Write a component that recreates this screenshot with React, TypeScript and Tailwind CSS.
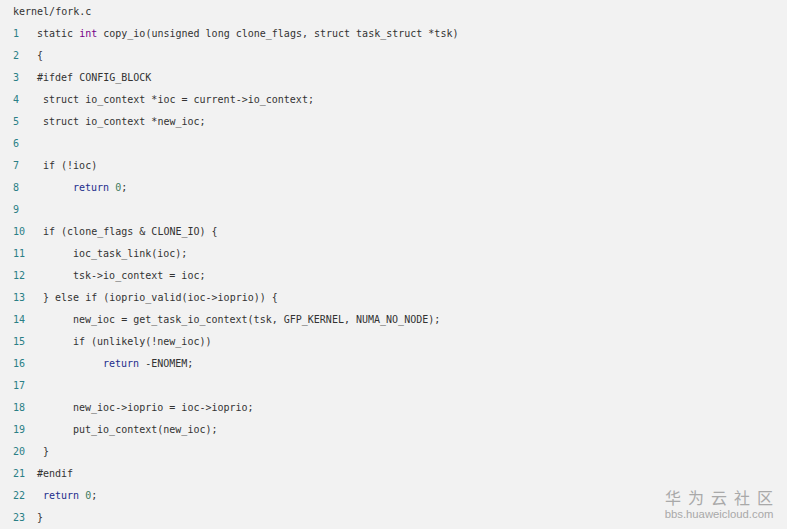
import React from "react";

type Seg = { t: string; c?: string };
const K = "text-[#770088]";
const R = "text-[#1c2d8c]";
const N = "text-[#3d7a5c]";

const lines: { pl: number; segs: Seg[] }[] = [
  { pl: 0, segs: [{ t: "static " }, { t: "int", c: K }, { t: " copy_io(unsigned long clone_flags, struct task_struct *tsk)" }] },
  { pl: 0, segs: [{ t: "{" }] },
  { pl: 0, segs: [{ t: "#ifdef CONFIG_BLOCK" }] },
  { pl: 6, segs: [{ t: "struct io_context *ioc = current->io_context;" }] },
  { pl: 6, segs: [{ t: "struct io_context *new_ioc;" }] },
  { pl: 0, segs: [{ t: "" }] },
  { pl: 6, segs: [{ t: "if (!ioc)" }] },
  { pl: 36, segs: [{ t: "return", c: R }, { t: " " }, { t: "0", c: N }, { t: ";" }] },
  { pl: 0, segs: [{ t: "" }] },
  { pl: 6, segs: [{ t: "if (clone_flags & CLONE_IO) {" }] },
  { pl: 36, segs: [{ t: "ioc_task_link(ioc);" }] },
  { pl: 36, segs: [{ t: "tsk->io_context = ioc;" }] },
  { pl: 6, segs: [{ t: "} else if (ioprio_valid(ioc->ioprio)) {" }] },
  { pl: 36, segs: [{ t: "new_ioc = get_task_io_context(tsk, GFP_KERNEL, NUMA_NO_NODE);" }] },
  { pl: 36, segs: [{ t: "if (unlikely(!new_ioc))" }] },
  { pl: 66, segs: [{ t: "return", c: R }, { t: " -ENOMEM;" }] },
  { pl: 0, segs: [{ t: "" }] },
  { pl: 36, segs: [{ t: "new_ioc->ioprio = ioc->ioprio;" }] },
  { pl: 36, segs: [{ t: "put_io_context(new_ioc);" }] },
  { pl: 6, segs: [{ t: "}" }] },
  { pl: 0, segs: [{ t: "#endif" }] },
  { pl: 6, segs: [{ t: "return", c: R }, { t: " " }, { t: "0", c: N }, { t: ";" }] },
  { pl: 0, segs: [{ t: "}" }] },
];

const plClass: Record<number, string> = {
  0: "pl-0",
  6: "pl-[6px]",
  36: "pl-[36px]",
  66: "pl-[66px]",
};

export default function App() {
  return (
    <div className="relative w-[787px] h-[529px] overflow-hidden bg-[#f2f2f2] text-[#333333] font-['DejaVu_Sans_Mono','Liberation_Mono',monospace] text-[10px]">
      <div className="pl-[13px] pt-[1px]">
        <div className="h-[22px] leading-[22px] whitespace-pre">kernel/fork.c</div>
        {lines.map((l, i) => (
          <div key={i} className="flex h-[22px] leading-[22px] whitespace-pre">
            <span className="w-[24px] shrink-0 text-[#2a7f86]">{i + 1}</span>
            <span className={plClass[l.pl]}>
              {l.segs.map((s, j) => (
                <span key={j} className={s.c}>
                  {s.t}
                </span>
              ))}
            </span>
          </div>
        ))}
      </div>
      <div className="absolute left-[658px] top-[487px] flex flex-col items-center text-[#a9a9a9] font-['Liberation_Sans',Arial,sans-serif]">
        <div className="text-[16px] leading-[20px] tracking-[7px] pl-[7px] font-['Noto_Sans_CJK_SC',sans-serif]">华为云社区</div>
        <div className="text-[11.3px] leading-[12px] mt-[1px]">bbs.huaweicloud.com</div>
      </div>
    </div>
  );
}
